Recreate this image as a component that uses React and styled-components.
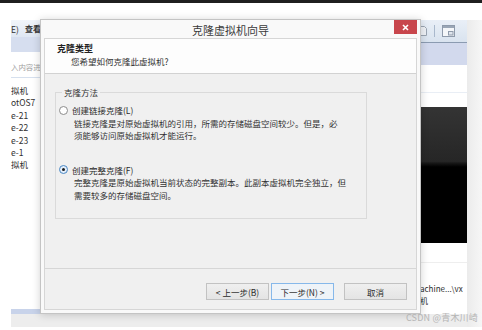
import React from "react";
import styled, { createGlobalStyle } from "styled-components";

const GlobalStyle = createGlobalStyle`
  html, body {
    margin: 0;
    padding: 0;
    background: #ffffff;
  }
  * {
    box-sizing: border-box;
  }
`;

const FONT = `"Noto Sans CJK SC", "Noto Sans", "Liberation Sans", sans-serif`;

const Page = styled.div`
  position: relative;
  width: 482px;
  height: 330px;
  overflow: hidden;
  display: flex;
  flex-direction: column;
  background: #ffffff;
  font-family: ${FONT};
  color: #2a2a2a;
`;

const TopStrip = styled.div`
  height: 3px;
  background: #1f1f1f;
`;

const Desk = styled.div`
  flex: 1;
  display: flex;
  padding: 17px 0 3px 11px;
`;

const AppWindow = styled.div`
  flex: 1;
  display: flex;
  flex-direction: column;
`;

const Gutter = styled.div`
  width: 15px;
  background: linear-gradient(to right, #ebebeb, #f6f6f6);
`;

const AppBody = styled.div`
  height: 289px;
  display: flex;
  background: #ffffff;
`;

const StatusStrip = styled.div`
  height: 5px;
  display: flex;
  background: #ffffff;
`;

const StatusSegment = styled.div`
  width: 77px;
  background: #c8d3ea;
`;

const AppFooter = styled.div`
  flex: 1;
  background: #ededed;
`;

/* left pane of the window behind the dialog */
const LeftPane = styled.div`
  width: 30px;
  display: flex;
  flex-direction: column;
  overflow: hidden;
  font-size: 8.5px;
`;

const MenuRow = styled.div`
  height: 17px;
  display: flex;
  align-items: center;
  gap: 6px;
  white-space: nowrap;
  background: linear-gradient(#f1f5fa, #dfe7f2);
  color: #333;
  b {
    font-weight: 700;
    font-size: 8px;
  }
`;

const NavBand = styled.div`
  height: 15px;
  background: #d6deef;
`;

const SearchBox = styled.div`
  height: 26px;
  display: flex;
  align-items: center;
  padding-top: 3px;
  white-space: nowrap;
  font-size: 7.4px;
  color: #a0a0a0;
  border-bottom: 1px solid #d6e0ee;
`;

const TreeList = styled.div`
  padding-top: 6px;
  display: flex;
  flex-direction: column;
`;

const TreeItem = styled.div`
  height: 12.4px;
  line-height: 12.4px;
  white-space: nowrap;
  color: #303030;
`;

const MiddlePane = styled.div`
  flex: 1;
`;

/* right pane of the window behind the dialog */
const RightPane = styled.div`
  width: 47px;
  display: flex;
  flex-direction: column;
  font-size: 8.5px;
`;

const ToolStrip = styled.div`
  height: 23px;
  display: flex;
  align-items: center;
  gap: 7px;
  padding-left: 1px;
  background: linear-gradient(#e9eff7, #d9e3ef);
  border-bottom: 1px solid #8b9bb1;
`;

const ToolDivider = styled.div`
  width: 1px;
  height: 12px;
  background: #a9b8cc;
`;

const TabBand = styled.div`
  height: 22px;
  background: #d2d9ed;
`;

const InfoBlock = styled.div`
  height: 42px;
  display: flex;
  flex-direction: column;
`;

const InfoLine = styled.div`
  height: 28px;
  border-bottom: 1px solid #e9eef5;
`;

const Preview = styled.div`
  height: 136px;
  background: linear-gradient(#343434, #262626 40%, #1a1a1a 41%, #000000 44%, #000000);
`;

const LowerInfo = styled.div`
  flex: 1;
  display: flex;
  flex-direction: column;
`;

const LowerLine = styled.div`
  height: 20px;
  border-bottom: 1px solid #eeeeee;
`;

const PathText = styled.div`
  padding-top: 20px;
  line-height: 11.5px;
  white-space: nowrap;
  font-size: 8px;
  color: #2c2c2c;
`;

/* the wizard dialog, a window lying over the app */
const Dialog = styled.div`
  position: absolute;
  left: 40px;
  top: 19px;
  width: 381px;
  height: 295px;
  display: flex;
  flex-direction: column;
  padding: 0 3px 3px;
  background: #f9f9f9;
  border: 1px solid #c4c4c4;
  box-shadow: 0 1px 8px rgba(0, 0, 0, 0.18);
`;

const TitleBar = styled.div`
  height: 18px;
  display: grid;
  grid-template-columns: 1fr auto 1fr;
  align-items: center;
`;

const Title = styled.div`
  grid-column: 2;
  font-size: 11px;
  color: #3a3a3a;
  padding-top: 1px;
`;

const CloseButton = styled.div`
  grid-column: 3;
  justify-self: end;
  align-self: start;
  width: 23px;
  height: 14px;
  display: flex;
  align-items: center;
  justify-content: center;
  background: #c8464c;
`;

const Content = styled.div`
  flex: 1;
  display: flex;
  flex-direction: column;
  border: 1px solid #d6d6d6;
  background: #f0f0f0;
`;

const Header = styled.div`
  height: 35px;
  padding: 4px 0 0 12px;
  background: #fdfdfd;
  border-bottom: 1px solid #d2d2d2;
  font-size: 8.5px;
  line-height: 12px;
`;

const HeaderTitle = styled.div`
  font-weight: 700;
  font-size: 9px;
  color: #222;
`;

const HeaderSub = styled.div`
  padding-left: 14px;
  color: #333;
`;

const Body = styled.div`
  flex: 1;
  padding: 12px 49px 0 10px;
`;

const GroupBox = styled.fieldset`
  margin: 0;
  padding: 6px 0 17px 3px;
  border: 1px solid #dadada;
  font-size: 8.5px;
  line-height: 12.5px;
`;

const Legend = styled.legend`
  margin-left: 3px;
  padding: 0 2px;
  font-size: 8.5px;
  line-height: 12px;
  color: #333;
`;

const Option = styled.div`
  display: flex;
  flex-direction: column;
  margin-top: ${(p) => (p.$first ? "0" : "22px")};
`;

const OptionLabel = styled.div`
  display: flex;
  align-items: center;
  gap: 4px;
  white-space: nowrap;
  color: #2a2a2a;
`;

const Radio = styled.span`
  width: 9px;
  height: 9px;
  border-radius: 50%;
  display: flex;
  align-items: center;
  justify-content: center;
  border: 1px solid ${(p) => (p.$checked ? "#4a88c4" : "#8c8c8c")};
  background: ${(p) => (p.$checked ? "#e3eefa" : "#ffffff")};

  &::after {
    content: "";
    width: 3px;
    height: 3px;
    border-radius: 50%;
    background: ${(p) => (p.$checked ? "#1c1c1c" : "transparent")};
  }
`;

const Description = styled.div`
  padding-left: 15px;
  white-space: nowrap;
  color: #333;
`;

const Footer = styled.div`
  height: 41px;
  display: flex;
  justify-content: flex-end;
  align-items: flex-start;
  gap: 2px;
  padding: 14px 9px 0 0;
  border-top: 1px solid #d6d6d6;
`;

const Button = styled.div`
  width: 63px;
  height: 17px;
  display: flex;
  align-items: center;
  justify-content: center;
  margin-left: ${(p) => (p.$apart ? "8px" : "0")};
  font-size: 8.5px;
  color: #2a2a2a;
  white-space: nowrap;
  border: 1px solid ${(p) => (p.$focused ? "#86b8ea" : "#c2c2c2")};
  background: ${(p) =>
    p.$focused ? "#eef3f8" : "linear-gradient(#efefef, #e4e4e4)"};
`;

const Watermark = styled.div`
  position: absolute;
  right: 4px;
  bottom: 6px;
  font-size: 9px;
  letter-spacing: 0.2px;
  color: #b4b4b4;
  white-space: nowrap;
`;

const WindowIcon = () => (
  <svg width="13" height="12" viewBox="0 0 13 12">
    <rect x="0.5" y="0.5" width="12" height="11" fill="#f4f6f9" stroke="#8e9aab" />
    <rect x="1" y="1" width="11" height="2" fill="#9aa6b6" />
    <rect x="6.5" y="6.5" width="4.5" height="3.5" fill="#dfe5ee" stroke="#8e9aab" />
  </svg>
);

const DocIcon = () => (
  <svg width="6" height="12" viewBox="0 0 6 12">
    <path d="M0 1.5 H3.5 L5.5 3.5 V10.5 H0" fill="#eef1f6" stroke="#9aa4b2" />
  </svg>
);

export default function App() {
  return (
    <>
      <GlobalStyle />
      <Page>
        <TopStrip />
        <Desk>
          <AppWindow>
            <AppBody>
              <LeftPane>
                <MenuRow>
                  <span>E)</span>
                  <b>查看</b>
                </MenuRow>
                <NavBand />
                <SearchBox>入内容进</SearchBox>
                <TreeList>
                  <TreeItem>拟机</TreeItem>
                  <TreeItem>otOS7</TreeItem>
                  <TreeItem>e-21</TreeItem>
                  <TreeItem>e-22</TreeItem>
                  <TreeItem>e-23</TreeItem>
                  <TreeItem>e-1</TreeItem>
                  <TreeItem>拟机</TreeItem>
                </TreeList>
              </LeftPane>
              <MiddlePane />
              <RightPane>
                <ToolStrip>
                  <DocIcon />
                  <ToolDivider />
                  <WindowIcon />
                </ToolStrip>
                <TabBand />
                <InfoBlock>
                  <InfoLine />
                </InfoBlock>
                <Preview />
                <LowerInfo>
                  <LowerLine />
                  <PathText>
                    achine...\vx
                    <br />
                    机
                  </PathText>
                </LowerInfo>
              </RightPane>
            </AppBody>
            <StatusStrip>
              <StatusSegment />
            </StatusStrip>
            <AppFooter />
          </AppWindow>
          <Gutter />
        </Desk>

        <Dialog>
          <TitleBar>
            <Title>克隆虚拟机向导</Title>
            <CloseButton>
              <svg width="7" height="7" viewBox="0 0 7 7">
                <path d="M1 1 L6 6 M6 1 L1 6" stroke="#ffffff" strokeWidth="1.6" />
              </svg>
            </CloseButton>
          </TitleBar>
          <Content>
            <Header>
              <HeaderTitle>克隆类型</HeaderTitle>
              <HeaderSub>您希望如何克隆此虚拟机?</HeaderSub>
            </Header>
            <Body>
              <GroupBox>
                <Legend>克隆方法</Legend>
                <Option $first>
                  <OptionLabel>
                    <Radio />
                    创建链接克隆(L)
                  </OptionLabel>
                  <Description>
                    链接克隆是对原始虚拟机的引用，所需的存储磁盘空间较少。但是，必
                    <br />
                    须能够访问原始虚拟机才能运行。
                  </Description>
                </Option>
                <Option>
                  <OptionLabel>
                    <Radio $checked />
                    创建完整克隆(F)
                  </OptionLabel>
                  <Description>
                    完整克隆是原始虚拟机当前状态的完整副本。此副本虚拟机完全独立，但
                    <br />
                    需要较多的存储磁盘空间。
                  </Description>
                </Option>
              </GroupBox>
            </Body>
            <Footer>
              <Button>&lt; 上一步(B)</Button>
              <Button $focused>下一步(N) &gt;</Button>
              <Button $apart>取消</Button>
            </Footer>
          </Content>
        </Dialog>

        <Watermark>CSDN @青木川崎</Watermark>
      </Page>
    </>
  );
}
